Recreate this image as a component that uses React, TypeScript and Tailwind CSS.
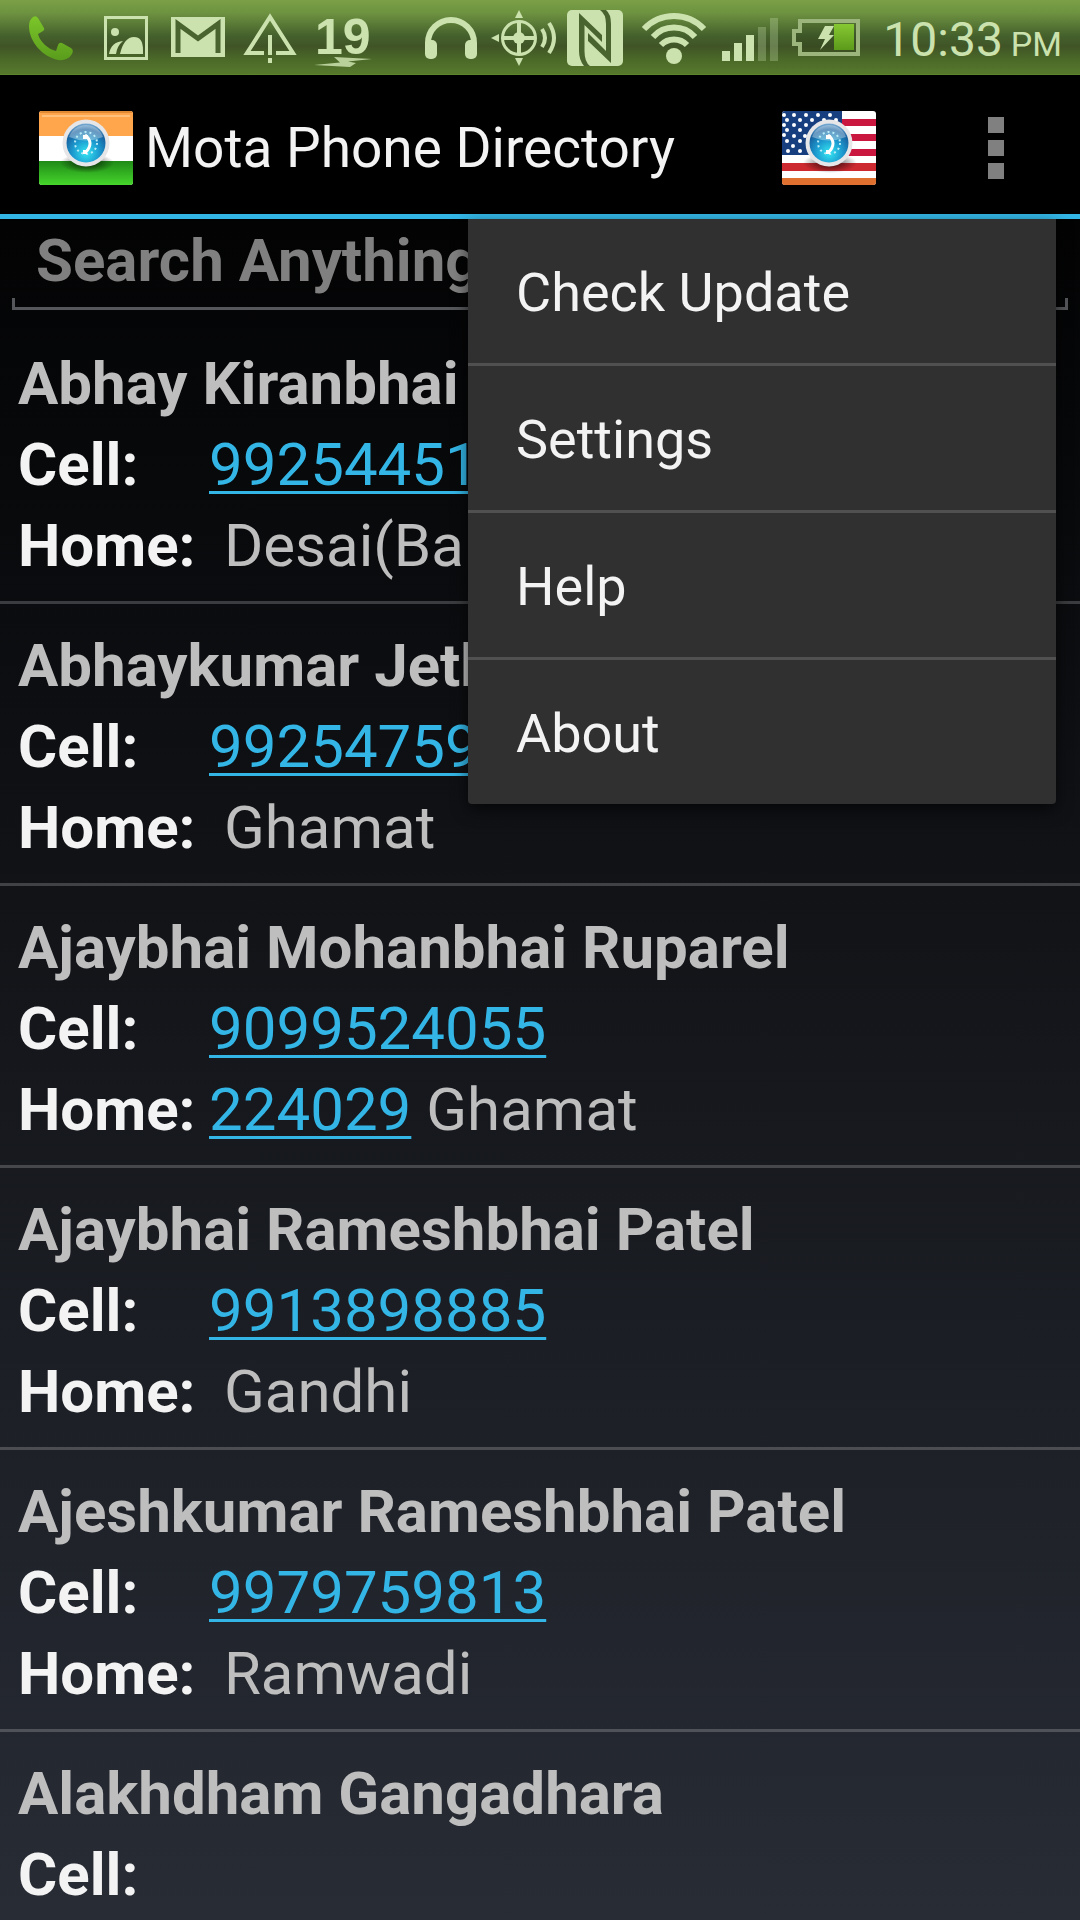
import { useState, type ReactNode } from 'react';

type Contact = {
  name: string;
  cell?: string;
  homePhone?: string;
  area?: string;
};

type StatusIconProps = {
  x: number;
  width: number;
  label: string;
  children: ReactNode;
};

const CONTACTS: Contact[] = [
  { name: 'Abhay Kiranbhai', cell: '99254451', area: 'Desai(Ba' },
  { name: 'Abhaykumar Jeth', cell: '99254759', area: 'Ghamat' },
  { name: 'Ajaybhai Mohanbhai Ruparel', cell: '9099524055', homePhone: '224029', area: 'Ghamat' },
  { name: 'Ajaybhai Rameshbhai Patel', cell: '9913898885', area: 'Gandhi' },
  { name: 'Ajeshkumar Rameshbhai Patel', cell: '9979759813', area: 'Ramwadi' },
  { name: 'Alakhdham Gangadhara' },
];

const MENU_ITEMS = ['Check Update', 'Settings', 'Help', 'About'];

const STARS = [
  [2, 4], [12, 4], [24, 4], [36, 4], [48, 4],
  [5, 9], [18, 9], [30, 9], [42, 9], [54, 9],
  [2, 14], [12, 14], [24, 14],
  [5, 19], [18, 19],
  [2, 24], [12, 25], [23, 25],
  [5, 30], [18, 30],
  [11, 35],
  [6, 40], [18, 40],
];

// every status icon shares the bar's 75px high canvas
const StatusIcon = ({ x, width, label, children }: StatusIconProps) => (
  <svg
    width={width}
    height={75}
    viewBox={`${x} 0 ${width} 75`}
    role="img"
    aria-label={label}
    className="flex-shrink-0 fill-[#cbe2ae]"
  >
    {children}
  </svg>
);

const StatusBar = () => (
  <div className="flex justify-between h-[75px] bg-[linear-gradient(#7a9f46_0%,#6f9441_16%,#44602c_48%,#405426_62%,#4a6828_78%,#56782c_98%,#5f8a2c_100%)]">
    {/* NOTIFICATIONS */}
    <div className="flex pl-5">
      <StatusIcon x={20} width={70} label="Call">
        <defs>
          <linearGradient id="phone" x1="0" y1="0" x2="0" y2="1">
            <stop offset="0" stopColor="#7cc62a" />
            <stop offset="1" stopColor="#5a9c1c" />
          </linearGradient>
        </defs>
        <path
          d="M33 17Q36 15 38 18L44 28Q45 30 43 31L38 34C40 42 48 49 56 51L58 45Q59 42 62 43L71 48Q74 50 72 54Q68 61 58 60C43 57 29 42 29 26Q29 20 33 17Z"
          fill="url(#phone)"
        />
      </StatusIcon>
      <StatusIcon x={90} width={70} label="Picture">
        <rect x="105.5" y="17.5" width="41" height="41" fill="none" stroke="#cbe2ae" strokeWidth="3" />
        <circle cx="115" cy="32" r="4" />
        <path d="M109 54Q111 42 123 41Q117 46 116 54Z" />
        <path d="M120 54Q124 37 134 37Q143 37 143 50V54Z" />
      </StatusIcon>
      <StatusIcon x={160} width={74} label="Mail">
        <rect x="171" y="17" width="54" height="40" />
        <path d="M178 53V24L198 38.500L218 24V53" fill="none" stroke="#4a642f" strokeWidth="5" />
      </StatusIcon>
      <StatusIcon x={234} width={70} label="Warning">
        <path d="M264 53H247L270 17L293 53H276" fill="none" stroke="#cbe2ae" strokeWidth="4" />
        <rect x="268" y="35" width="4" height="20" />
        <rect x="268" y="58" width="4" height="5" />
      </StatusIcon>
      <StatusIcon x={304} width={80} label="19 degrees">
        <text x="315" y="54" className="text-[50px] font-bold font-['Liberation_Sans',sans-serif]">
          19
        </text>
        <path d="M334 57L372 59L348 61.500L356 63L350 67L314 65L340 62.500Z" fillOpacity="0.850" />
      </StatusIcon>
    </div>

    {/* SYSTEM */}
    <div className="flex pr-[18px]">
      <StatusIcon x={416} width={70} label="Headphones">
        <path d="M429 46V43A23 23 0 0 1 475 43V46" fill="none" stroke="#cbe2ae" strokeWidth="6" />
        <rect x="426" y="40" width="12" height="19" rx="5" />
        <rect x="466" y="40" width="12" height="19" rx="5" />
      </StatusIcon>
      <StatusIcon x={486} width={76} label="Location">
        <circle cx="520" cy="38" r="16.500" fill="none" stroke="#cbe2ae" strokeWidth="3" />
        <circle cx="520" cy="38" r="6" />
        <path d="M518 22H522V54H518ZM504 36H536V40H504ZM520 10L524 18H516ZM520 66L524 58H516ZM492 38L500 34V42Z" />
        <path d="M543 29Q549 38 543 47M550 23Q560 38 550 53" fill="none" stroke="#cbe2ae" strokeWidth="4" />
      </StatusIcon>
      <StatusIcon x={562} width={70} label="NFC">
        <rect x="568" y="10" width="56" height="56" rx="5" />
        <path
          d="M580 13L603 35V42L585.500 25V51Q585.500 62 591 66H585Q580 60 580 51ZM612 63L589 41V33L607 51V24Q607 14 601 10H607Q612 14 612 24Z"
          fill="#4a642f"
        />
      </StatusIcon>
      <StatusIcon x={632} width={84} label="Wi-Fi">
        <g fill="none" stroke="#cbe2ae" strokeWidth="6">
          <path d="M645 29A41 41 0 0 1 705 29" />
          <path d="M654 37A28 28 0 0 1 696 37" />
          <path d="M662 45A18 18 0 0 1 688 45" />
        </g>
        <circle cx="675" cy="56" r="8" />
      </StatusIcon>
      <StatusIcon x={716} width={70} label="Signal">
        <path d="M723 51H731V61H723ZM735 43H743V61H735ZM747 35H755V61H747Z" />
        <path d="M759 27H767V61H759ZM771 18H779V61H771Z" fillOpacity="0.300" />
      </StatusIcon>
      <StatusIcon x={786} width={84} label="Charging">
        <defs>
          <linearGradient id="charge" x1="0" y1="0" x2="0" y2="1">
            <stop offset="0" stopColor="#86c832" />
            <stop offset="1" stopColor="#5c9a1a" />
          </linearGradient>
        </defs>
        <path d="M801 21H859V54H801V44H795V31H801Z" fill="#000000" fillOpacity="0.100" stroke="#9cb57c" strokeWidth="4" />
        <rect x="835" y="24" width="20" height="26" fill="url(#charge)" />
        <path d="M826 26H835L830 35H835L821 50L826 39H819Z" />
      </StatusIcon>
      <div className="flex items-baseline gap-2 pl-[14px] pt-1 text-[#cbe2ae] leading-[72px]">
        <span className="text-[48px]">10:33</span>
        <span className="text-[34px]">PM</span>
      </div>
    </div>
  </div>
);

const Globe = () => (
  <g>
    <ellipse cx="48" cy="52" rx="27" ry="10" fill="url(#globe-shadow)" />
    <circle cx="47" cy="32" r="23.500" fill="#e6e6e8" />
    <circle cx="47" cy="32" r="19.500" fill="url(#globe)" />
    <path d="M30 26A18 18 0 0 1 64 26Q47 33 30 26Z" fill="#ffffff" fillOpacity="0.350" />
    <circle cx="47" cy="32" r="11" fill="none" stroke="#b9ecf8" strokeWidth="2" strokeDasharray="2 3" />
    <path d="M46 24Q56 32 46 42" fill="none" stroke="#ffffff" strokeWidth="3" />
    <path d="M44 24H49V28H44ZM44 39H48V43H44Z" fill="#ffffff" />
  </g>
);

const IndiaFlag = () => (
  <svg width="94" height="74" viewBox="0 0 94 74" role="img" aria-label="India" className="flex-shrink-0">
    <defs>
      <radialGradient id="globe" cx="0.5" cy="0.75" r="0.75">
        <stop offset="0" stopColor="#35e6f2" />
        <stop offset="0.45" stopColor="#1c9bd0" />
        <stop offset="0.8" stopColor="#17619f" />
        <stop offset="1" stopColor="#7fb0d6" />
      </radialGradient>
      <radialGradient id="globe-shadow">
        <stop offset="0" stopColor="#000000" stopOpacity="0.75" />
        <stop offset="1" stopColor="#000000" stopOpacity="0" />
      </radialGradient>
      <linearGradient id="green" x1="0" y1="0" x2="0" y2="1">
        <stop offset="0" stopColor="#1f8a17" />
        <stop offset="1" stopColor="#46d62c" />
      </linearGradient>
      <clipPath id="flag">
        <rect width="94" height="74" rx="3" />
      </clipPath>
    </defs>
    <g clipPath="url(#flag)">
      <rect width="94" height="74" fill="#ffffff" />
      <rect width="94" height="25" fill="#ffa64d" />
      <path d="M0 0H94V2H0Z" fill="#e08a35" />
      <path d="M3 4H91V6H3Z" fill="#ffc07c" />
      <rect y="50" width="94" height="24" fill="url(#green)" />
      <Globe />
    </g>
  </svg>
);

const UsaFlag = () => (
  <svg width="94" height="74" viewBox="0 0 94 74" aria-hidden="true">
    <g clipPath="url(#flag)">
      <rect width="94" height="74" fill="#ffffff" />
      <path d="M60 8H94V15H60ZM60 23H94V30H60ZM60 38H94V45H60Z" fill="#c9173f" />
      <rect y="52" width="94" height="8" fill="#cc2a30" />
      <rect y="67" width="94" height="7" fill="#e0702f" />
      <rect width="60" height="44" fill="#173f80" />
      {STARS.map(([x, y]) => (
        <circle key={`${x}-${y}`} cx={x} cy={y} r="2" fill="#ffffff" />
      ))}
      <Globe />
    </g>
  </svg>
);

const OptionsMenu = () => (
  <div
    role="menu"
    className="absolute top-[calc(100%+5px)] right-6 z-10 w-[588px] rounded-b-sm bg-[#303030] divide-y-3 divide-[#505050] shadow-[0_6px_16px_rgba(0,0,0,0.6)]"
  >
    {MENU_ITEMS.map(item => (
      <button
        key={item}
        type="button"
        role="menuitem"
        className="block w-full h-[147px] last:h-36 pl-12 pt-1 text-left text-[54px] leading-[72px]"
      >
        {item}
      </button>
    ))}
  </div>
);

const ContactRow = ({ name, cell, homePhone, area }: Contact) => (
  <li className="pt-[21px] pb-[15px] pl-[18px] border-b-3 border-[#ffffff]/20 whitespace-nowrap text-[60px] leading-[81px]">
    <h2 className="font-bold text-[#bebebe]">{name}</h2>
    <div className="flex">
      <span className="w-[191px] flex-shrink-0 font-bold">Cell:</span>
      {cell && (
        <a href={`tel:${cell}`} className="text-[#33b5e5] underline decoration-3 underline-offset-6">
          {cell}
        </a>
      )}
    </div>
    {(homePhone || area) && (
      <div className="flex">
        <span className="w-[191px] flex-shrink-0 font-bold">Home:</span>
        <span className="whitespace-pre text-[#bebebe]">
          {homePhone && (
            <a href={`tel:${homePhone}`} className="text-[#33b5e5] underline decoration-3 underline-offset-6">
              {homePhone}
            </a>
          )}
          {area && ` ${area}`}
        </span>
      </div>
    )}
  </li>
);

const App = () => {
  const [menuOpen, setMenuOpen] = useState(true);
  const [search, setSearch] = useState('');

  return (
    <div className="flex flex-col h-screen overflow-hidden bg-[linear-gradient(#000000_5%,#08090b_25%,#282c35_100%)] text-[#f3f3f3] font-[Roboto,sans-serif]">
      <StatusBar />

      {/* ACTION BAR */}
      <header className="relative flex items-center flex-shrink-0 h-36 pt-[6px] pl-[39px] bg-black border-b-5 border-[#33b5e5]">
        <IndiaFlag />
        <h1 className="pl-3 text-[55px] leading-[72px] whitespace-nowrap">Mota Phone Directory</h1>
        <button type="button" aria-label="Switch to USA directory" className="ml-auto">
          <UsaFlag />
        </button>
        <button
          type="button"
          aria-label="More options"
          aria-expanded={menuOpen}
          onClick={() => setMenuOpen(!menuOpen)}
          className="flex flex-col items-center gap-[7px] w-[168px] ml-9"
        >
          <span className="size-4 bg-[#808080]" />
          <span className="size-4 bg-[#808080]" />
          <span className="size-4 bg-[#808080]" />
        </button>
        {menuOpen && <OptionsMenu />}
      </header>

      {/* SEARCH */}
      <div className="flex-shrink-0 px-3 pt-1 pb-3">
        <input
          type="text"
          aria-label="Search"
          placeholder="Search Anything"
          value={search}
          onChange={e => setSearch(e.target.value)}
          className="block w-full h-[75px] px-6 text-[60px] leading-[75px] font-bold outline-none placeholder:text-[#808080]"
        />
        <div className="h-3 border-3 border-t-0 border-[#55575a]" />
      </div>

      {/* CONTACTS */}
      <ul>
        {CONTACTS.map(contact => (
          <ContactRow key={contact.name} {...contact} />
        ))}
      </ul>
    </div>
  );
};

export default App;
